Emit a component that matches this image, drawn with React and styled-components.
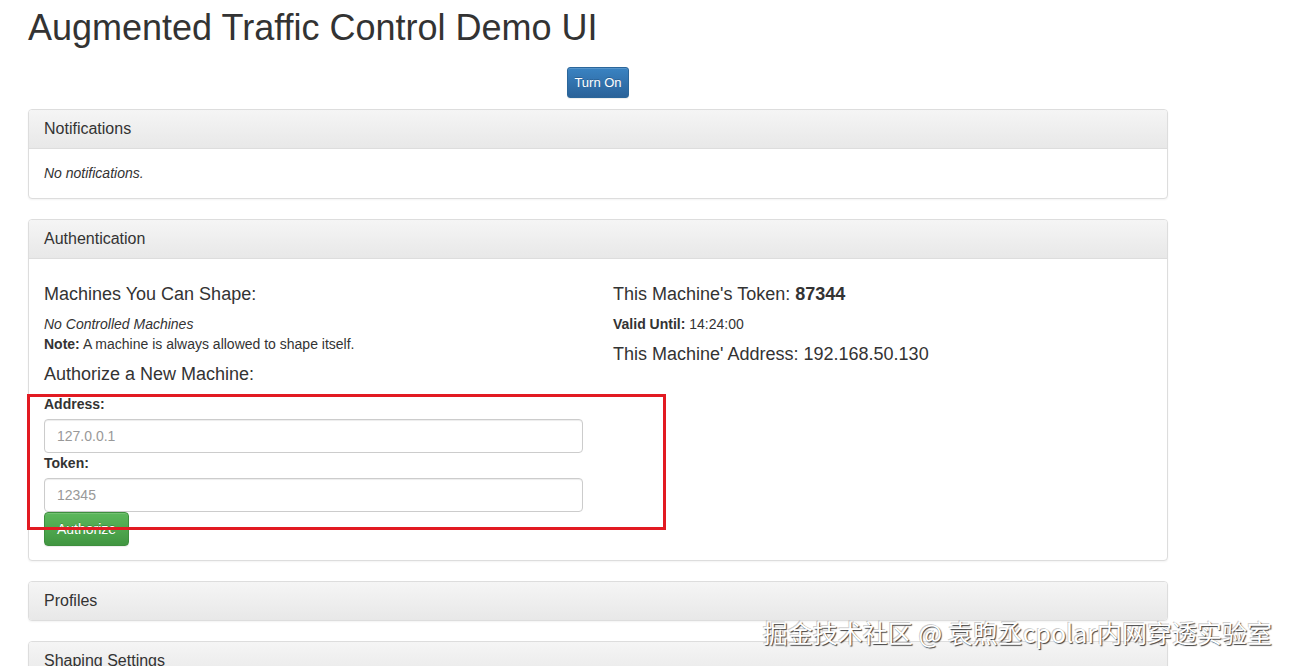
import styled, { createGlobalStyle } from "styled-components";

const GlobalStyle = createGlobalStyle`
  html, body {
    margin: 0;
    padding: 0;
    background: #fff;
  }
  body {
    font-family: "Liberation Sans", Arial, Helvetica, sans-serif;
    font-size: 14px;
    line-height: 20px;
    color: #333;
  }
  * {
    box-sizing: border-box;
  }
`;

const Page = styled.div`
  position: relative;
  width: 1292px;
  min-height: 666px;
`;

const Container = styled.div`
  width: 1140px;
  margin-left: 28px;
  display: flex;
  flex-direction: column;
`;

const Title = styled.h1`
  margin: 8px 0 0;
  font-size: 36px;
  font-weight: 500;
  line-height: 1.1;
  color: #333;
`;

const ButtonRow = styled.div`
  display: flex;
  justify-content: center;
  margin: 19px 0 11px;
`;

const Button = styled.button`
  font-family: inherit;
  color: #fff;
  border-radius: ${(p) => (p.small ? "3px" : "4px")};
  border: 1px solid ${(p) => (p.green ? "#3e8f3e" : "#2b669a")};
  background-image: ${(p) =>
    p.green
      ? "linear-gradient(to bottom, #5cb85c 0%, #419641 100%)"
      : "linear-gradient(to bottom, #3a83c2 0%, #2a6299 100%)"};
  text-shadow: 0 -1px 0 rgba(0, 0, 0, 0.2);
  box-shadow: inset 0 1px 0 rgba(255, 255, 255, 0.15), 0 1px 1px rgba(0, 0, 0, 0.075);
  font-size: ${(p) => (p.small ? "13px" : "14px")};
  line-height: ${(p) => (p.small ? "19px" : "20px")};
  padding: ${(p) => (p.small ? "5px 6px" : "6px 12px")};
  cursor: pointer;
  align-self: flex-start;
`;

const Panel = styled.div`
  border: 1px solid #ddd;
  border-radius: 4px;
  margin-bottom: 20px;
  background: #fff;
  box-shadow: 0 1px 2px rgba(0, 0, 0, 0.05);
  overflow: hidden;
`;

const PanelHeading = styled.div`
  padding: 9px 15px 9px;
  font-size: 16px;
  line-height: 20px;
  color: #333;
  background-image: linear-gradient(to bottom, #f5f5f5 0%, #e8e8e8 100%);
  border-bottom: ${(p) => (p.bare ? "none" : "1px solid #ddd")};
`;

const PanelBody = styled.div`
  padding: ${(p) => (p.tight ? "15px 15px 14px" : "14px 15px 15px")};
`;

const Italic = styled.div`
  font-style: italic;
`;

const Columns = styled.div`
  display: grid;
  grid-template-columns: 554px 524px;
  column-gap: 15px;
`;

const Column = styled.div`
  display: flex;
  flex-direction: column;
`;

const SubTitle = styled.h4`
  margin: 10px 0;
  font-size: 18px;
  font-weight: 500;
  line-height: 20px;
  color: #333;

  b {
    font-weight: 700;
  }
`;

const Line = styled.div`
  b {
    font-weight: 700;
  }
`;

const Label = styled.label`
  display: block;
  font-weight: 700;
  margin-bottom: 5px;
`;

const Input = styled.input`
  display: block;
  width: 539px;
  height: 34px;
  padding: 6px 12px;
  font-family: inherit;
  font-size: 14px;
  color: #555;
  background: #fff;
  border: 1px solid #ccc;
  border-radius: 4px;
  box-shadow: inset 0 1px 1px rgba(0, 0, 0, 0.075);
  outline: none;

  &::placeholder {
    color: #999;
  }
`;

const RedBox = styled.div`
  position: absolute;
  left: 27px;
  top: 394px;
  width: 639px;
  height: 136px;
  border: 3px solid #e21a22;
  pointer-events: none;
`;

const Watermark = styled.div`
  position: absolute;
  right: 20px;
  top: 615px;
  font-family: "Noto Sans CJK SC", "Liberation Sans", sans-serif;
  font-size: 25px;
  line-height: 34px;
  color: #fff;
  text-shadow: 1px 1px 1px rgba(0, 0, 0, 0.75), -1px -1px 0 rgba(0, 0, 0, 0.2);
  white-space: nowrap;
`;

export default function App() {
  return (
    <Page>
      <GlobalStyle />
      <Container>
        <Title>Augmented Traffic Control Demo UI</Title>
        <ButtonRow>
          <Button small>Turn On</Button>
        </ButtonRow>

        <Panel>
          <PanelHeading>Notifications</PanelHeading>
          <PanelBody>
            <Italic>No notifications.</Italic>
          </PanelBody>
        </Panel>

        <Panel>
          <PanelHeading>Authentication</PanelHeading>
          <PanelBody tight>
            <Columns>
              <Column>
                <SubTitle>Machines You Can Shape:</SubTitle>
                <Italic>No Controlled Machines</Italic>
                <Line>
                  <b>Note:</b> A machine is always allowed to shape itself.
                </Line>
                <SubTitle>Authorize a New Machine:</SubTitle>
                <Label>Address:</Label>
                <Input placeholder="127.0.0.1" />
                <Label>Token:</Label>
                <Input placeholder="12345" />
                <Button green>Authorize</Button>
              </Column>
              <Column>
                <SubTitle>
                  This Machine's Token: <b>87344</b>
                </SubTitle>
                <Line>
                  <b>Valid Until:</b> 14:24:00
                </Line>
                <SubTitle>This Machine' Address: 192.168.50.130</SubTitle>
              </Column>
            </Columns>
          </PanelBody>
        </Panel>

        <Panel>
          <PanelHeading bare>Profiles</PanelHeading>
        </Panel>

        <Panel>
          <PanelHeading bare>Shaping Settings</PanelHeading>
        </Panel>
      </Container>

      <RedBox />
      <Watermark>掘金技术社区 @ 袁煦丞cpolar内网穿透实验室</Watermark>
    </Page>
  );
}
